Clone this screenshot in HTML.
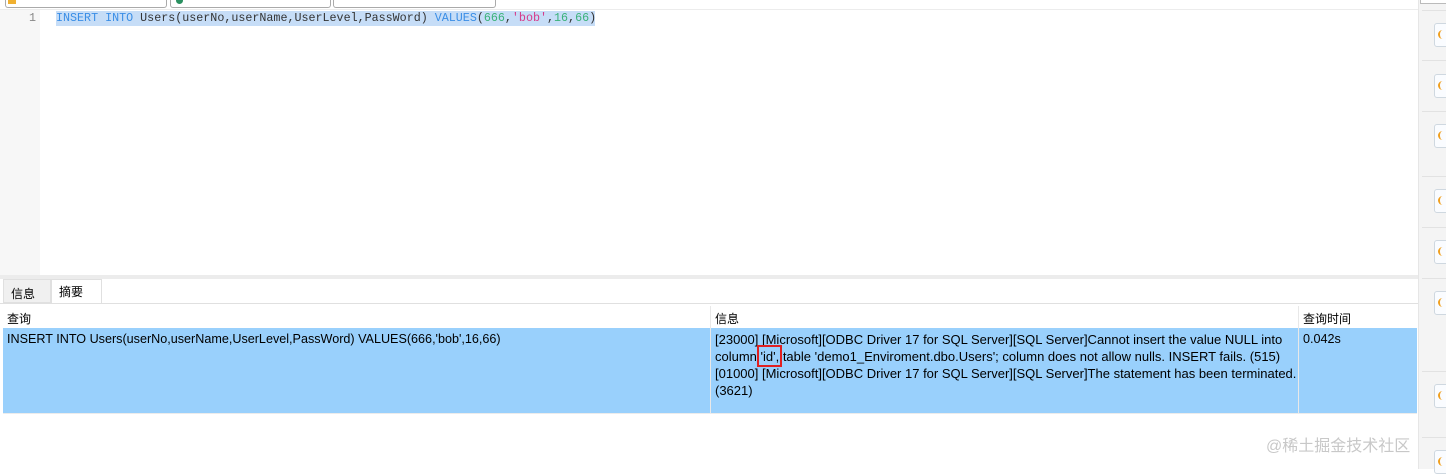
<!DOCTYPE html>
<html><head><meta charset="utf-8"><style>
body{margin:0;width:1446px;height:469px;overflow:hidden;background:#fff;font-family:"Liberation Sans","Noto Sans CJK SC",sans-serif;font-size:12px;color:#000;position:relative}
.a{position:absolute}
.btn{position:absolute;top:-4px;height:11px;border:1px solid #aaa;border-top:none;border-radius:0 0 3px 3px;background:#fff}
.code{font-family:"Liberation Mono",monospace;font-size:11.7px;white-space:pre}
.rp{position:absolute;left:1418px;top:0;width:28px;height:469px;background:#f4f4f4;border-left:1px solid #e6e6e6}
.sep{position:absolute;left:1422px;width:24px;height:1px;background:#e2e2e2}
.ic{position:absolute;left:1434px;width:14px;height:22px;border:1px solid #cfd8e0;border-radius:3px;background:#fafcff}
.ic:after{content:"";position:absolute;left:3px;top:6px;width:5px;height:9px;border-left:2px solid #f0a020;border-radius:6px 0 0 6px}
.cell{position:absolute;line-height:17px;white-space:nowrap;font-size:12.6px}
</style></head><body>
<div class="btn" style="left:5px;width:160px"></div>
<div class="btn" style="left:170px;width:159px"></div>
<div class="btn" style="left:333px;width:161px"></div>
<div class="a" style="left:8px;top:0;width:8px;height:4px;background:#f0b030"></div>
<div class="a" style="left:176px;top:0;width:7px;height:4px;background:#2a9060;border-radius:0 0 4px 4px"></div>
<div class="a" style="left:0;top:9px;width:40px;height:266px;background:#f7f7f7"></div>
<div class="a" style="left:0;top:9px;width:1418px;height:1px;background:#ececec"></div>
<div class="a code" style="left:29px;top:11px;color:#888">1</div>
<div class="a" style="left:56px;top:11px;width:539px;height:15px;background:#c6ddf7"></div>
<div class="a code" style="left:56px;top:11px;color:#333"><span style="color:#3a8ee6">INSERT INTO</span> Users(userNo,userName,UserLevel,PassWord) <span style="color:#3a8ee6">VALUES</span>(<span style="color:#3bb27a">666</span>,<span style="color:#d63b8a">'bob'</span>,<span style="color:#3bb27a">16</span>,<span style="color:#3bb27a">66</span>)</div>
<div class="a" style="left:0;top:275px;width:1418px;height:4px;background:#ececec"></div>
<div class="a" style="left:3px;top:279px;width:48px;height:24px;background:#f0f0f0;border:1px solid #e0e0e0;box-sizing:border-box"></div>
<div class="a" style="left:51px;top:279px;width:51px;height:25px;background:#fff;border:1px solid #e0e0e0;border-bottom:none;box-sizing:border-box"></div>
<div class="a" style="left:11px;top:285px">信息</div>
<div class="a" style="left:59px;top:283px">摘要</div>
<div class="a" style="left:0;top:303px;width:1418px;height:1px;background:#e0e0e0"></div>
<div class="a" style="left:3px;top:328px;width:1414px;height:85px;background:#99d0fc"></div>
<div class="a" style="left:710px;top:306px;width:1px;height:107px;background:#e8e8e8"></div>
<div class="a" style="left:1298px;top:306px;width:1px;height:107px;background:#e8e8e8"></div>
<div class="a" style="left:3px;top:413px;width:1414px;height:1px;background:#ececec"></div>
<div class="cell" style="left:7px;top:311px;font-size:12px">查询</div>
<div class="cell" style="left:715px;top:311px;font-size:12px">信息</div>
<div class="cell" style="left:1303px;top:311px;font-size:12px">查询时间</div>
<div class="cell" style="left:7px;top:331px">INSERT INTO Users(userNo,userName,UserLevel,PassWord) VALUES(666,'bob',16,66)</div>
<div class="cell" style="left:715px;top:331px;font-size:13px">[23000] [Microsoft][ODBC Driver 17 for SQL Server][SQL Server]Cannot insert the value NULL into<br>column 'id', table 'demo1_Enviroment.dbo.Users'; column does not allow nulls. INSERT fails. (515)<br>[01000] [Microsoft][ODBC Driver 17 for SQL Server][SQL Server]The statement has been terminated.<br>(3621)</div>
<div class="a" style="left:757px;top:345px;width:25px;height:22px;border:2px solid #e02020;box-sizing:border-box"></div>
<div class="cell" style="left:1303px;top:331px">0.042s</div>
<div class="a" style="left:1266px;top:432px;font-size:16px;color:#c8c8c8">@稀土掘金技术社区</div>
<div class="rp"></div>
<div class="a" style="left:1420px;top:0;width:26px;height:3px;border:1px solid #bbb;border-top:none;background:#fff"></div>
<div class="sep" style="top:10px"></div><div class="sep" style="top:60px"></div><div class="sep" style="top:111px"></div><div class="sep" style="top:176px"></div><div class="sep" style="top:227px"></div><div class="sep" style="top:278px"></div><div class="sep" style="top:371px"></div><div class="sep" style="top:437px"></div>
<div class="ic" style="top:23px"></div><div class="ic" style="top:74px"></div><div class="ic" style="top:124px"></div><div class="ic" style="top:189px"></div><div class="ic" style="top:240px"></div><div class="ic" style="top:291px"></div><div class="ic" style="top:384px"></div><div class="ic" style="top:450px"></div>
</body></html>
